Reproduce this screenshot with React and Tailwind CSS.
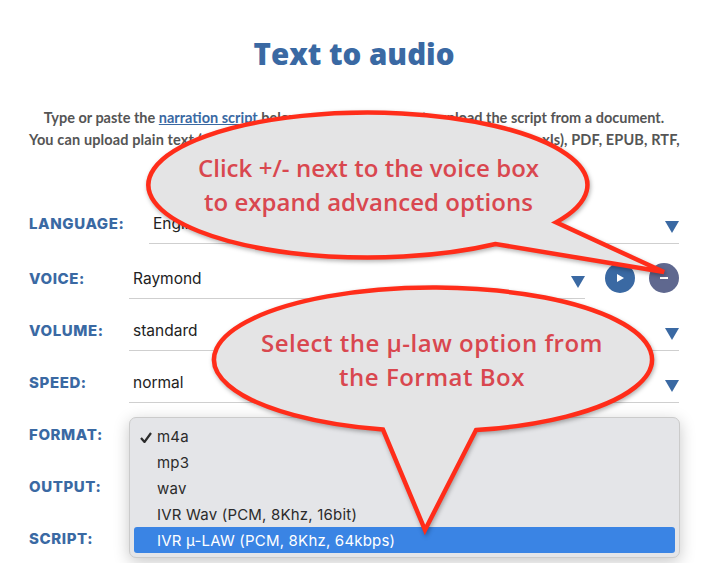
const BLUE = "#3a69a3";

function Arrow() {
  return (
    <svg width="14" height="12" viewBox="0 0 14 12" className="shrink-0">
      <path d="M0 0H14L7 12Z" fill={BLUE} />
    </svg>
  );
}

function Select({ value, className = "" }) {
  return (
    <div className={`flex flex-1 items-end justify-between border-b border-[#cfcfcf] pb-[10px] pl-1 h-[38px] ${className}`}>
      <span className="relative top-[1px] text-[15.5px] leading-[20px] text-[#222] font-['Inter',sans-serif]">{value}</span>
      <Arrow />
    </div>
  );
}

function Label({ children, className = "" }) {
  return (
    <div className={`text-[15px] leading-[20px] font-extrabold tracking-[0.6px] text-[#3a69a3] font-['Inter',sans-serif] ${className}`}>
      {children}
    </div>
  );
}

function Row({ label, value, labelClass = "w-[100px]", children, className = "mt-[14px]" }) {
  return (
    <div className={`flex items-center ${className}`}>
      <Label className={`${labelClass} shrink-0 self-start pt-[8px]`}>{label}</Label>
      {children || <Select value={value} />}
    </div>
  );
}

function Callouts() {
  return (
    <>
      <svg width="722" height="563" viewBox="0 0 722 563" className="absolute left-0 top-0 drop-shadow-[1px_2px_2px_rgba(0,0,0,0.3)]">
        <path
          d="M556 222.4 A219.5 72.5 0 1 0 495.6 244 L664 272 Z"
          fill="#e4e4e5" stroke="#ff2d1a" strokeWidth="4.5" strokeLinejoin="miter"
        />
        <path
          d="M476 430.1 A219 72 0 1 0 383 429.6 L425 530 Z"
          fill="#e4e4e5" stroke="#ff2d1a" strokeWidth="4.5" strokeLinejoin="miter"
        />
      </svg>
      <div className="absolute left-[150px] top-[151px] w-[437px] text-center text-[24px] leading-[34px] font-semibold tracking-[0.05px] text-[#d9474f] font-['Open_Sans',sans-serif]">
        <div>Click +/- next to the voice box</div>
        <div>to expand advanced options</div>
      </div>
      <div className="absolute left-[215px] top-[326px] w-[434px] text-center text-[24px] leading-[34px] font-semibold tracking-[0.5px] text-[#d9474f] font-['Open_Sans',sans-serif]">
        <div>Select the µ-law option from</div>
        <div>the Format Box</div>
      </div>
    </>
  );
}

function Dropdown() {
  const items = ["m4a", "mp3", "wav", "IVR Wav (PCM, 8Khz, 16bit)"];
  return (
    <div className="absolute left-[129px] top-[417px] w-[551px] h-[141px] rounded-[7px] border border-[#cbcbcb] bg-[#e4e5e8] px-[4px] pt-[5px] shadow-[0_4px_16px_rgba(0,0,0,0.22)] font-['Inter',sans-serif] text-[15px] tracking-[0.2px] text-[#2b2b2b]">
      {items.map((t, i) => (
        <div key={t} className="relative h-[26px] leading-[28px] pl-[23px]">
          {i === 0 && (
            <svg width="12" height="11" viewBox="0 0 12 11" className="absolute left-[6px] top-[9px]">
              <path d="M1 6L4.5 10L11 1" fill="none" stroke="#2b2b2b" strokeWidth="2.2" />
            </svg>
          )}
          {t}
        </div>
      ))}
      <div className="h-[26px] leading-[28px] pl-[23px] rounded-[3px] bg-[#3a84e4] text-white">
        IVR µ-LAW (PCM, 8Khz, 64kbps)
      </div>
    </div>
  );
}

export default function App() {
  return (
    <div className="relative w-[722px] h-[563px] overflow-hidden bg-white">
      <div className="pl-[29px] pr-[43px]">
        <h1 className="pt-[32px] text-center text-[29.5px] leading-[44px] font-extrabold text-[#3a69a3] font-['Open_Sans',sans-serif]">
          Text to audio
        </h1>
        <div className="mt-[31px] text-center text-[14.5px] leading-[22px] font-bold text-[#555] font-['Lato',sans-serif] whitespace-nowrap">
          <p>
            Type or paste the <a className="text-[#3a69a3] underline">narration script</a> below, or use the button to upload the script from a document.
          </p>
          <p className="tracking-[0.13px]">You can upload plain text (.txt), Microsoft Word (.doc, .docx), Excel (.xlsx, .csv, .xls), PDF, EPUB, RTF,</p>
        </div>
        <div className="mt-[55px]">
          <Row label="LANGUAGE:" value="English" labelClass="w-[120px]" className="" />
          <Row label="VOICE:" labelClass="w-[100px]" className="mt-[17px]">
            <Select value="Raymond" className="mr-[20px]" />
            <div className="flex gap-[14px] self-start pt-[2px]">
              <button className="flex h-[30px] w-[30px] items-center justify-center rounded-full bg-[#3a69a3]">
                <svg width="7" height="8" viewBox="0 0 7 8"><path d="M0 0L7 4L0 8Z" fill="#fff" /></svg>
              </button>
              <button className="flex h-[30px] w-[30px] items-center justify-center rounded-full bg-[#5f688f]">
                <span className="block h-[2px] w-[8px] bg-white" />
              </button>
            </div>
          </Row>
          <Row label="VOLUME:" value="standard" />
          <Row label="SPEED:" value="normal" />
          <Row label="FORMAT:" value="" />
          <Row label="OUTPUT:" value="" />
          <div className="mt-[14px] flex h-[56px] border-b border-[#cfcfcf] pt-[8px]">
            <Label>SCRIPT:</Label>
          </div>
        </div>
      </div>
      <Dropdown />
      <Callouts />
    </div>
  );
}
